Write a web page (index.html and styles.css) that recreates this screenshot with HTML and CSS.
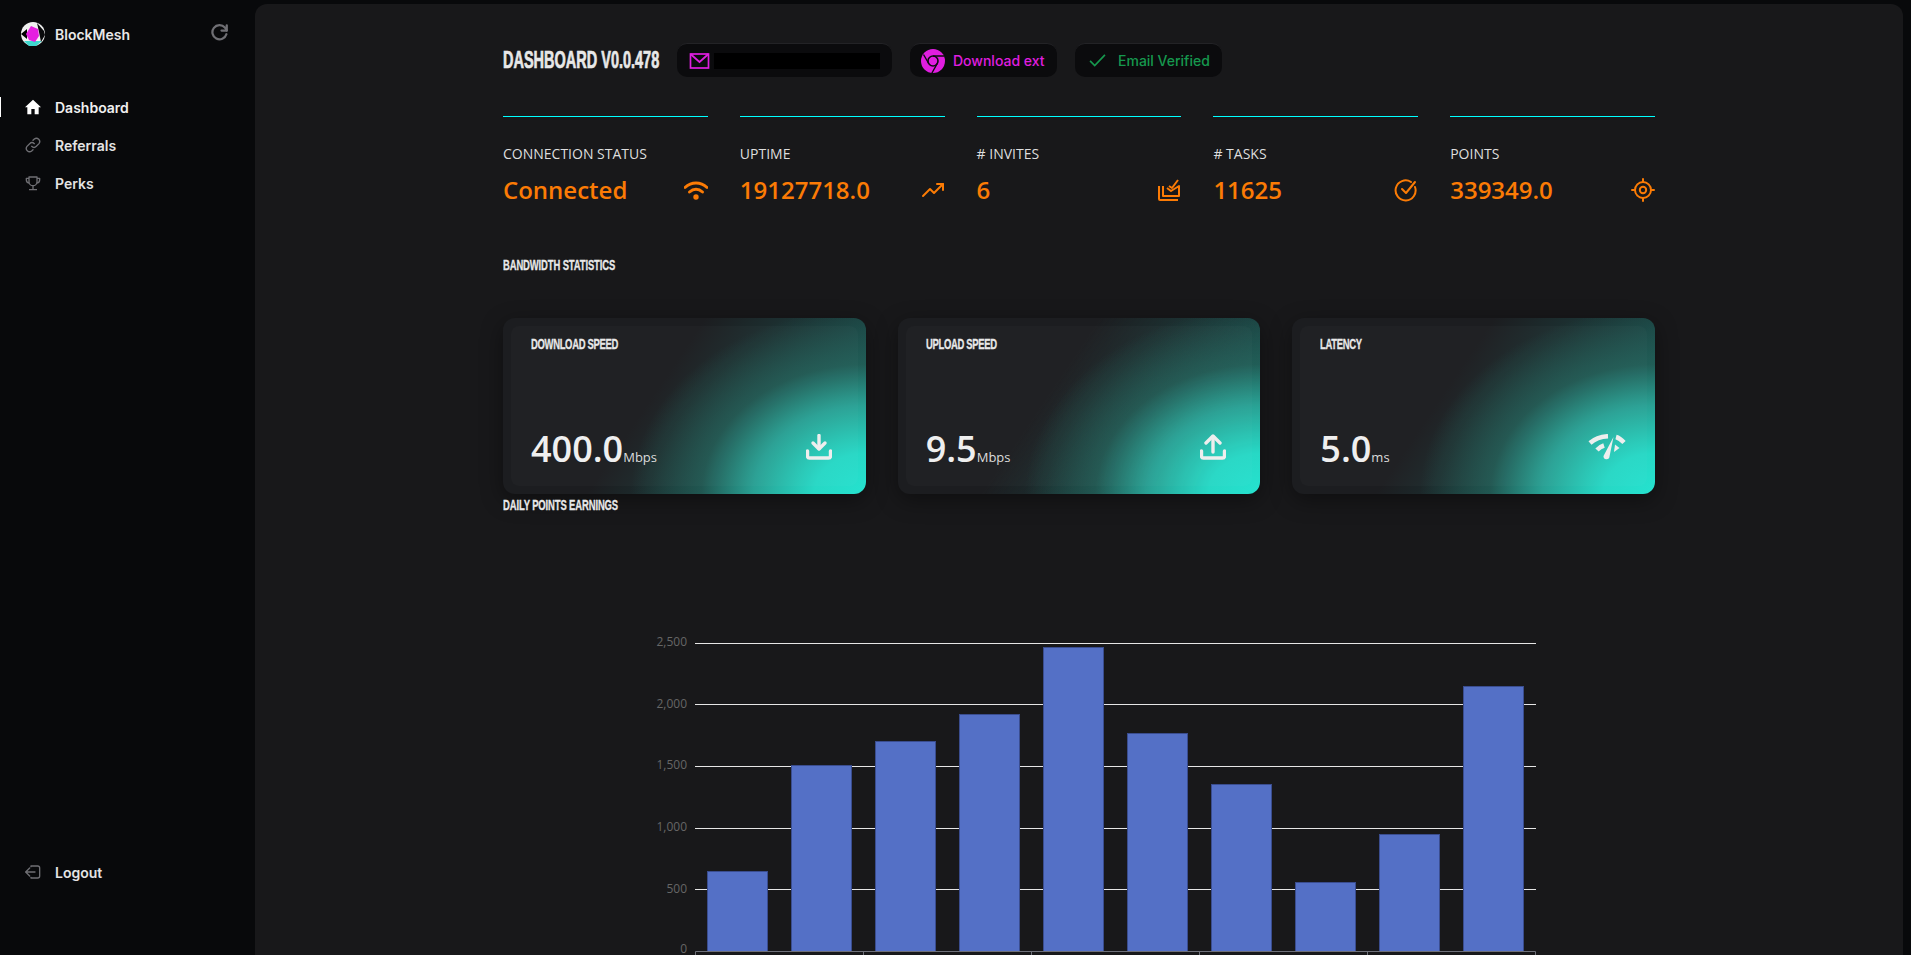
FILE: index.html
```html
<!DOCTYPE html>
<html lang="en">
<head>
  <title>BlockMesh Dashboard</title>
  <link rel="stylesheet" href="styles.css">
</head>
<body>
  <div class="app">
    <aside class="sidebar">
      <div class="brand">
        <div class="brand-name">
          <svg class="logo" viewBox="0 0 24 24">
            <circle cx="12" cy="12" r="12" fill="#f0f0f0"/>
            <path d="M3 19 L21 19 L15 24 L8 24 Z" fill="#3fd8cf"/>
            <path d="M0 12 L6 7 L6 17 Z" fill="#000"/>
            <path d="M16 1 L23 9 L24 13 L20 20 L18 10 Z" fill="#0a0a0c"/>
            <path d="M10 4 L17 7 L18 14 L14 20 L8 18 L5 12 Z" fill="#e61fe0"/>
          </svg>
          <span>BlockMesh</span>
        </div>
        <svg class="refresh" viewBox="0 0 24 24" fill="none" stroke="#6f6f74" stroke-width="3" stroke-linecap="round" stroke-linejoin="round">
          <path d="M21 3v7h-7"/>
          <path d="M20.500 15a9.500 9.500 0 1 1-2-9L21 10"/>
        </svg>
      </div>
      <nav class="nav">
        <a class="nav-item active">
          <svg class="nav-icon" viewBox="0 0 24 24" fill="#fff"><path d="M12 1 L0 12.500 L3.500 12.500 L3.500 23 L9.500 23 L9.500 15 L14.500 15 L14.500 23 L20.500 23 L20.500 12.500 L24 12.500 Z"/></svg>
          <span>Dashboard</span>
        </a>
        <a class="nav-item">
          <svg class="nav-icon" viewBox="0 0 24 24" fill="none" stroke="#6f6f74" stroke-width="2" stroke-linecap="round"><path d="M10 14a5 5 0 0 0 7 0l4-4a5 5 0 0 0-7-7l-2 2"/><path d="M14 10a5 5 0 0 0-7 0l-4 4a5 5 0 0 0 7 7l2-2"/></svg>
          <span>Referrals</span>
        </a>
        <a class="nav-item">
          <svg class="nav-icon" viewBox="0 0 24 24" fill="none" stroke="#6f6f74" stroke-width="2" stroke-linejoin="round"><path d="M6 3h12v7a6 6 0 0 1-12 0z"/><path d="M6 5H2v2a5 5 0 0 0 4 5M18 5h4v2a5 5 0 0 1-4 5M12 16v5M6 22h12"/></svg>
          <span>Perks</span>
        </a>
      </nav>
      <a class="nav-item logout">
        <svg class="nav-icon" viewBox="0 0 24 24" fill="none" stroke="#6f6f74" stroke-width="2" stroke-linecap="round" stroke-linejoin="round"><path d="M9 4V3h10a3 3 0 0 1 3 3v12a3 3 0 0 1-3 3H9v-1"/><path d="M15 12H2M7 6l-6 6 6 6"/></svg>
        <span>Logout</span>
      </a>
    </aside>

    <main class="main">
      <div class="content">
        <header class="top-row">
          <h1 class="page-title"><span class="condensed">Dashboard v0.0.478</span></h1>
          <div class="pill pill-email">
            <svg class="pill-icon" viewBox="0 0 20 16" fill="none" stroke="#e01ee0" stroke-width="1.700"><rect x="1" y="1" width="18" height="14"/><path d="M1 1l9 8 9-8"/></svg>
            <span class="redacted"></span>
          </div>
          <a class="pill pill-download">
            <svg class="chrome" viewBox="0 0 24 24">
              <circle cx="12" cy="12" r="12" fill="#e01ee0"/>
              <circle cx="12" cy="12" r="5" fill="#e01ee0" stroke="#0c0c0e" stroke-width="1.600"/>
              <path d="M12 7H23M7.700 14.500L2.500 5.500M16.300 14.500l-5.400 9.500" stroke="#0c0c0e" stroke-width="1.400" fill="none"/>
            </svg>
            <span>Download ext</span>
          </a>
          <div class="pill pill-verified">
            <svg class="check" viewBox="0 0 18 14" fill="none" stroke="#16984e" stroke-width="1.800"><path d="M1 7.500l5 5L17 1"/></svg>
            <span>Email Verified</span>
          </div>
        </header>

        <section class="stats">
          <div class="stat">
            <div class="stat-label">Connection Status</div>
            <div class="stat-row">
              <span class="stat-value">Connected</span>
              <svg class="stat-icon" viewBox="0 0 24 24" fill="none" stroke="#fb7b05" stroke-width="3" stroke-linecap="round"><path d="M1 9.500c6.500-6 15.500-6 22 0"/><path d="M5.500 14c4-3.600 9-3.600 13 0"/><circle cx="12" cy="19" r="1.200" fill="#fb7b05"/></svg>
            </div>
          </div>
          <div class="stat">
            <div class="stat-label">Uptime</div>
            <div class="stat-row">
              <span class="stat-value">19127718.0</span>
              <svg class="stat-icon" viewBox="0 0 24 24" fill="none" stroke="#fb7b05" stroke-width="2" stroke-linecap="round" stroke-linejoin="round"><path d="M2 18l7-7 4 4 9-9"/><path d="M16 6h6v6"/></svg>
            </div>
          </div>
          <div class="stat">
            <div class="stat-label"># Invites</div>
            <div class="stat-row">
              <span class="stat-value">6</span>
              <svg class="stat-icon" viewBox="0 0 24 24" fill="none" stroke="#fb7b05" stroke-width="2" stroke-linejoin="round"><path d="M2 8v13a1 1 0 0 0 1 1h18"/><path d="M6 8v10h16V8l-8 5-4-3"/><path d="M12 8l3 2 6-8"/></svg>
            </div>
          </div>
          <div class="stat">
            <div class="stat-label"># Tasks</div>
            <div class="stat-row">
              <span class="stat-value">11625</span>
              <svg class="stat-icon" viewBox="0 0 24 24" fill="none" stroke="#fb7b05" stroke-width="2" stroke-linecap="round" stroke-linejoin="round"><path d="M21 9a10 10 0 1 1-4-5"/><path d="M8 11l4 4 9-11"/></svg>
            </div>
          </div>
          <div class="stat">
            <div class="stat-label">Points</div>
            <div class="stat-row">
              <span class="stat-value">339349.0</span>
              <svg class="stat-icon" viewBox="0 0 24 24" fill="none" stroke="#fb7b05" stroke-width="2" stroke-linecap="round"><circle cx="12" cy="12" r="8"/><circle cx="12" cy="12" r="3.200"/><path d="M12 1v3M12 20v3M1 12h3M20 12h3"/></svg>
            </div>
          </div>
        </section>

        <h2 class="section-title bandwidth-title"><span class="condensed">Bandwidth Statistics</span></h2>

        <section class="cards">
          <div class="card">
            <div class="card-inner">
              <div class="card-title"><span class="condensed">Download Speed</span></div>
              <div class="card-row">
                <div><span class="card-value">400.0</span><span class="card-unit">Mbps</span></div>
                <svg class="card-icon" viewBox="0 0 26 26" fill="none" stroke="#eee" stroke-width="3.400" stroke-linejoin="round" stroke-linecap="round"><path d="M13 1.500v13"/><path d="M7 9l6 6 6-6"/><path d="M1.500 17v5a2 2 0 0 0 2 2h19a2 2 0 0 0 2-2v-5"/></svg>
              </div>
            </div>
          </div>
          <div class="card">
            <div class="card-inner">
              <div class="card-title"><span class="condensed">Upload Speed</span></div>
              <div class="card-row">
                <div><span class="card-value">9.5</span><span class="card-unit">Mbps</span></div>
                <svg class="card-icon" viewBox="0 0 26 26" fill="none" stroke="#eee" stroke-width="3.400" stroke-linejoin="round" stroke-linecap="round"><path d="M13 3v15"/><path d="M6 9l7-7 7 7"/><path d="M1.500 17v5a2 2 0 0 0 2 2h19a2 2 0 0 0 2-2v-5"/></svg>
              </div>
            </div>
          </div>
          <div class="card">
            <div class="card-inner">
              <div class="card-title"><span class="condensed">Latency</span></div>
              <div class="card-row">
                <div><span class="card-value">5.0</span><span class="card-unit">ms</span></div>
                <svg class="card-icon card-icon-wide" viewBox="0 0 38 26">
                  <g fill="none" stroke="#eee" stroke-width="4.500" stroke-linecap="butt">
                    <path d="M2 9C7 4.500 13 2.500 20 2.200"/>
                    <path d="M28 3C31 3.800 33.500 5.800 36 8.500"/>
                    <path d="M9 16C11 13.800 13 12.500 16 11.500"/>
                  </g>
                  <path d="M27 10.500L31.500 14L26 18Z" fill="#eee"/>
                  <path d="M25.500 3L21.500 22.500A3 3 0 0 1 15.500 22Z" fill="#eee"/>
                </svg>
              </div>
            </div>
          </div>
        </section>

        <h2 class="section-title"><span class="condensed">Daily Points Earnings</span></h2>

        <svg class="chart" width="1152" height="440" viewBox="503 520 1152 440">
          <g class="grid">
            <path d="M695 643.500H1536M695 704.500H1536M695 766.500H1536M695 828.500H1536M695 889.500H1536"/>
          </g>
          <g class="labels">
            <text x="687" y="646">2,500</text>
            <text x="687" y="708">2,000</text>
            <text x="687" y="769">1,500</text>
            <text x="687" y="831">1,000</text>
            <text x="687" y="893">500</text>
            <text x="687" y="953">0</text>
          </g>
          <g class="bars">
            <rect x="707.500" y="871.500" width="60" height="80"/>
            <rect x="791.500" y="765.500" width="60" height="186"/>
            <rect x="875.500" y="741.500" width="60" height="210"/>
            <rect x="959.500" y="714.500" width="60" height="237"/>
            <rect x="1043.500" y="647.500" width="60" height="304"/>
            <rect x="1127.500" y="733.500" width="60" height="218"/>
            <rect x="1211.500" y="784.500" width="60" height="167"/>
            <rect x="1295.500" y="882.500" width="60" height="69"/>
            <rect x="1379.500" y="834.500" width="60" height="117"/>
            <rect x="1463.500" y="686.500" width="60" height="265"/>
          </g>
          <path class="axis" d="M695.500 956V951.500H1535.500V956M863.500 951.500V956M1031.500 951.500V956M1199.500 951.500V956M1367.500 951.500V956"/>
        </svg>
      </div>
    </main>
  </div>
</body>
</html>
```

FILE: styles.css
```css
* {
  box-sizing: border-box;
}

html, body {
  height: 100%;
}

body {
  margin: 0;
  overflow: hidden;
  background-color: #08090b;
  color: #e8e8e8;
  font-family: "Inter", "Noto Sans", sans-serif;
}

.app {
  display: flex;
  height: 955px;
}

/* sidebar */
.sidebar {
  display: flex;
  flex-direction: column;
  flex: 0 0 255px;
  padding: 21px 0 0;
}

.brand {
  display: flex;
  justify-content: space-between;
  align-items: flex-start;
  padding: 1px 26px 0 21px;
  height: 56px;
}

.brand-name {
  display: flex;
  align-items: center;
  gap: 10px;
  font-size: 14px;
  font-weight: 600;
}

.logo {
  width: 24px;
  height: 24px;
}

.refresh {
  width: 18px;
  height: 18px;
  margin-top: 1px;
}

.nav {
  display: flex;
  flex-direction: column;
  flex: 1;
  gap: 8px;
  margin-top: 15px;
}

.nav-item {
  display: flex;
  align-items: center;
  gap: 14px;
  height: 30px;
  padding-left: 25px;
  font-size: 14px;
  font-weight: 600;
  color: #e4e4e4;
}

.nav-item.active {
  position: relative;
  color: #f0f0f0;
}

.nav-item.active::before {
  content: "";
  position: absolute;
  left: 0;
  top: 5px;
  width: 1px;
  height: 20px;
  background-color: #fff;
}

.nav-icon {
  width: 16px;
  height: 16px;
  flex: none;
}

.logout {
  margin-bottom: 68px;
}

/* main panel */
.main {
  flex: 1;
  margin: 4px 8px 0 0;
  background-color: #18181a;
  border-radius: 12px 12px 0 0;
  overflow: hidden;
}

.content {
  width: 1152px;
  margin: 0 auto;
}

/* Bebas-like headings: no condensed face is installed, so the bold sans is squeezed */
.condensed {
  display: inline-block;
  white-space: nowrap;
  text-transform: uppercase;
  transform: scaleX(0.63);
  transform-origin: left center;
  -webkit-text-stroke: 0.3px #e8e8e8;
}

.top-row {
  display: flex;
  align-items: center;
  height: 34px;
  margin-top: 39px;
}

.page-title {
  width: 174px;
  margin: 0;
  font-family: "Liberation Sans", sans-serif;
  font-size: 23px;
  font-weight: 700;
  color: #e8e8e8;
}

.page-title .condensed {
  -webkit-text-stroke: 0.7px #e8e8e8;
}

.pill {
  display: flex;
  align-items: center;
  height: 34px;
  background-color: #0b0b0d;
  border-top: 1px solid #232326;
  border-radius: 10px;
  font-size: 14px;
  font-weight: 500;
}

.pill-email {
  width: 215px;
  padding-left: 12px;
  gap: 4px;
}

.pill-icon {
  width: 21px;
  height: 16px;
}

.redacted {
  width: 166px;
  height: 16px;
  background-color: #000;
}

.pill-download {
  width: 147px;
  margin-left: 18px;
  padding-left: 11px;
  gap: 8px;
  color: #e01ee0;
}

.chrome {
  width: 24px;
  height: 24px;
}

.pill-verified {
  width: 147px;
  margin-left: 18px;
  padding-left: 14px;
  gap: 12px;
  color: #16984e;
}

.check {
  width: 17px;
  height: 13px;
}

/* connection stats */
.stats {
  display: grid;
  grid-template-columns: repeat(5, 1fr);
  gap: 32px;
  margin-top: 39px;
}

.stat {
  padding-top: 27px;
  border-top: 1px solid #00ffff;
}

.stat-label {
  font-family: "Open Sans", sans-serif;
  font-size: 14px;
  line-height: 20px;
  text-transform: uppercase;
  color: #dedede;
}

.stat-row {
  display: flex;
  justify-content: space-between;
  align-items: center;
  margin-top: 10px;
}

.stat-value {
  font-family: "Open Sans", sans-serif;
  font-size: 24px;
  line-height: 32px;
  font-weight: 600;
  color: #fb7b05;
}

.stat-icon {
  width: 24px;
  height: 24px;
}

.section-title {
  margin: 0;
  font-family: "Liberation Sans", sans-serif;
  font-size: 15px;
  line-height: 16px;
  font-weight: 700;
  letter-spacing: -0.2px;
  color: #e8e8e8;
}

.bandwidth-title {
  margin-top: 51px;
}

/* speed cards */
.cards {
  display: grid;
  grid-template-columns: repeat(3, 1fr);
  gap: 32px;
  margin-top: 45px;
  margin-bottom: 3px;
}

.card {
  height: 176px;
  padding: 8px;
  border-radius: 12px;
  background:
    radial-gradient(ellipse 235px 185px at 100% 100%, #25e2cf 0%, #27d8c5 22%, rgba(42, 168, 154, 0.92) 48%, rgba(35, 104, 95, 0.65) 70%, rgba(31, 60, 60, 0) 100%),
    linear-gradient(124deg, rgba(28, 60, 60, 0) 42%, #1c4544 78%, #1f625d 100%),
    #1c1d20;
  box-shadow: 0 6px 22px rgba(0, 0, 0, 0.4);
}

.card-inner {
  display: flex;
  flex-direction: column;
  justify-content: space-between;
  height: 100%;
  padding: 10px 20px 17px;
  border-radius: 8px;
  background-color: rgba(255, 255, 255, 0.018);
}

.card-title {
  font-family: "Liberation Sans", sans-serif;
  font-size: 15px;
  line-height: 16px;
  font-weight: 700;
  letter-spacing: -0.5px;
  color: #e8e8e8;
}

.card-row {
  display: flex;
  justify-content: space-between;
  align-items: flex-end;
  padding-right: 6px;
}

.card-value {
  font-family: "Open Sans", sans-serif;
  font-size: 36px;
  line-height: 40px;
  font-weight: 600;
  color: #efefef;
}

.card-unit {
  font-family: "Open Sans", sans-serif;
  font-size: 13px;
  color: #dcdcdc;
}

.card-icon {
  width: 26px;
  height: 26px;
  margin-bottom: 9px;
}

.card-icon-wide {
  width: 38px;
  margin-right: -5px;
}

/* earnings chart */
.chart {
  display: block;
  margin-top: 7px;
  overflow: hidden;
}

.grid path {
  stroke: #e6e6e6;
  stroke-width: 1;
  fill: none;
}

.labels text {
  font-family: "Open Sans", sans-serif;
  font-size: 12px;
  text-anchor: end;
  fill: #666;
}

.bars rect {
  fill: #5470c6;
  stroke: #3a4d8f;
  stroke-width: 1;
}

.axis {
  stroke: #6e7079;
  stroke-width: 1;
  fill: none;
}
```
